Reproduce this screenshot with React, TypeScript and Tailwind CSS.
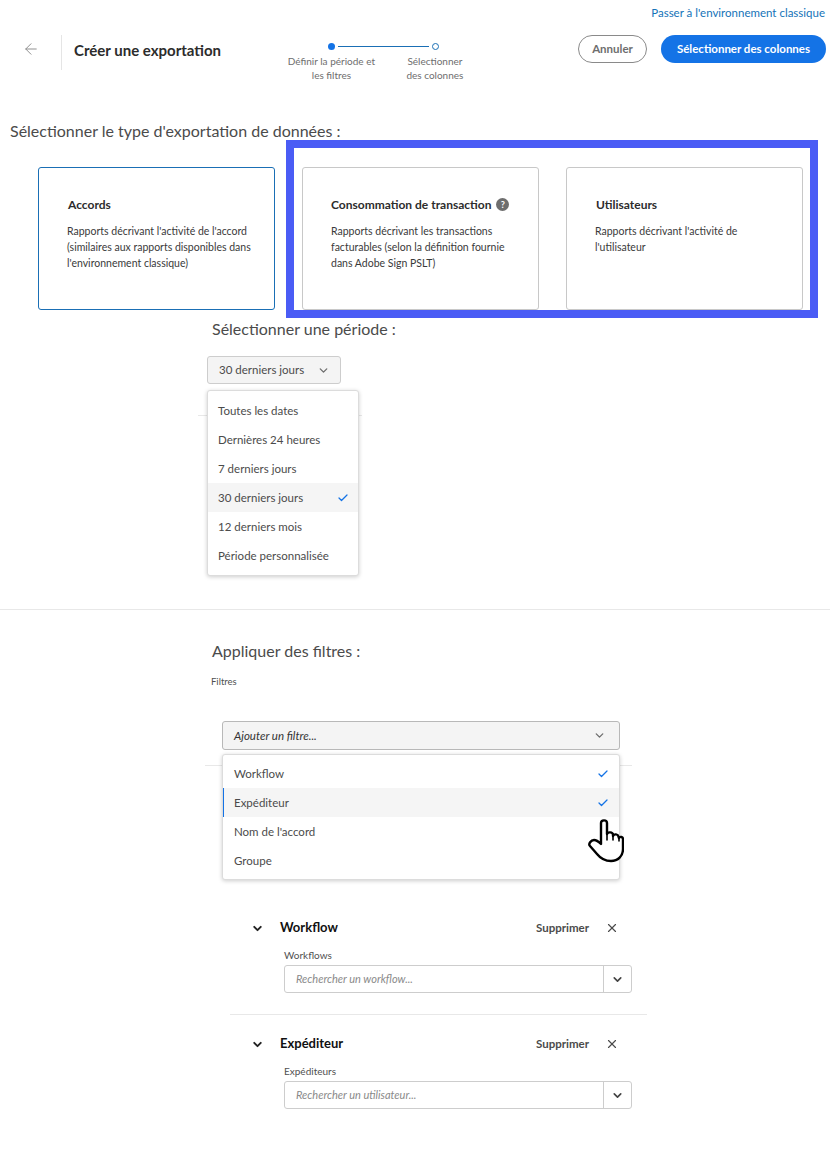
import { ArrowLeft, Check, ChevronDown, X } from 'lucide-react'

const PERIODS = ['Toutes les dates', 'Dernières 24 heures', '7 derniers jours', '30 derniers jours', '12 derniers mois', 'Période personnalisée']

const FILTERS = [
  { label: 'Workflow', checked: true },
  { label: 'Expéditeur', checked: true, active: true },
  { label: "Nom de l'accord" },
  { label: 'Groupe' },
]

function ExportCard({ title, lines, selected, help, className }: { title: string; lines: string[]; selected?: boolean; help?: boolean; className?: string }) {
  return (
    <div className={`w-[237px] h-[143px] shrink-0 rounded-[3px] border bg-white pl-[28px] ${selected ? 'border-[#1a6fb5]' : 'border-[#c8c8c8]'} ${className ?? ''}`}>
      <div className="flex items-center gap-[5px] pt-[27px] h-[46px] text-[12px] font-bold text-[#2c2c2c]">
        <span className={help ? '' : 'pl-[1px]'}>{title}</span>
        {help && (
          <span className="flex h-[13px] w-[13px] items-center justify-center rounded-full bg-[#6e6e6e] text-[9px] font-bold text-white">?</span>
        )}
      </div>
      <div className="mt-[9px] text-[10.5px] leading-[16px] text-[#3a3a3a]">
        {lines.map(l => <div key={l}>{l}</div>)}
      </div>
    </div>
  )
}

function FilterGroup({ title, label, placeholder }: { title: string; label: string; placeholder: string }) {
  return (
    <div className="pl-[20px]">
      <div className="flex items-center h-[20px]">
        <ChevronDown className="ml-[1px] h-[13px] w-[13px] text-[#222]" strokeWidth={3.5} />
        <span className="ml-[16px] text-[13px] font-bold text-[#111]">{title}</span>
        <span className="ml-auto text-[11.5px] font-bold text-[#4b4b4b]">Supprimer</span>
        <X className="ml-[16px] mr-[28px] h-[14px] w-[14px] text-[#4b4b4b]" strokeWidth={2} />
      </div>
      <div className="ml-[34px] mt-[11px] text-[10px] leading-[12px] text-[#505050]">{label}</div>
      <div className="ml-[34px] mt-[4px] flex h-[28px] w-[348px] items-center rounded-[3px] border border-[#cdcdcd] bg-white">
        <span className="flex-1 pl-[11px] text-[11px] italic text-[#8a8a8a]">{placeholder}</span>
        <span className="flex h-full w-[28px] items-center justify-center border-l border-[#cdcdcd]">
          <ChevronDown className="h-[13px] w-[13px] text-[#444]" strokeWidth={3} />
        </span>
      </div>
    </div>
  )
}

export default function App() {
  return (
    <div className="relative h-[1173px] w-[830px] overflow-hidden bg-white font-['Lato',sans-serif] text-[#4b4b4b]">
      <div className="flex h-[35px] justify-end pr-[5px] pt-[5px] text-[11.5px] leading-[16px] text-[#1473b8]">
        Passer à l'environnement classique
      </div>

      <header className="flex h-[35px] items-start">
        <div className="flex h-[28px] w-[61px] items-center justify-center">
          <ArrowLeft className="h-[18px] w-[18px] text-[#8a8a8a]" strokeWidth={1.25} />
        </div>
        <div className="h-[35px] border-l border-[#e5e5e5] pl-[12px] pt-[5px] text-[15px] font-bold leading-[20px] text-[#2c2c2c]">
          Créer une exportation
        </div>
        <div className="ml-[60px] flex w-[190px] flex-col">
          <div className="ml-[47px] mt-[8px] flex h-[7px] w-[111px] items-center">
            <span className="h-[7px] w-[7px] rounded-full bg-[#1473e6]" />
            <span className="mx-[3px] h-px flex-1 bg-[#1a6fb5]" />
            <span className="h-[7px] w-[7px] rounded-full border border-[#1a6fb5]" />
          </div>
          <div className="mt-[4px] flex text-center text-[10px] leading-[14px] text-[#6e6e6e]">
            <span className="w-[103px]">Définir la période et les filtres</span>
            <span className="ml-[17px] w-[74px]">Sélectionner des colonnes</span>
          </div>
        </div>
        <div className="ml-auto flex gap-[14px] pr-[4px]">
          <span className="flex h-[28px] w-[69px] items-center justify-center rounded-full border border-[#8a8a8a] text-[11.5px] font-bold text-[#6e6e6e]">Annuler</span>
          <span className="flex h-[28px] w-[165px] items-center justify-center rounded-full bg-[#1473e6] text-[11.5px] font-bold text-white">Sélectionner des colonnes</span>
        </div>
      </header>

      <h2 className="ml-[10px] mt-[51px] text-[16px] leading-[20px] text-[#4b4b4b]">Sélectionner le type d'exportation de données :</h2>

      <div className="-mt-px flex items-start pl-[38px]">
        <ExportCard
          title="Accords"
          selected
          className="mt-[27px] w-[236px]"
          lines={["Rapports décrivant l'activité de l'accord", '(similaires aux rapports disponibles dans', "l'environnement classique)"]}
        />
        <div className="ml-[11px] flex h-[178px] w-[532px] gap-[27px] border-[8px] border-[#4a5cf5] pl-[8px] pt-[19px]">
          <ExportCard
            title="Consommation de transaction"
            help
            lines={['Rapports décrivant les transactions', 'facturables (selon la définition fournie', 'dans Adobe Sign PSLT)']}
          />
          <ExportCard title="Utilisateurs" lines={["Rapports décrivant l'activité de", "l'utilisateur"]} />
        </div>
      </div>

      <section className="relative h-[292px] border-b border-[#e8e8e8] pl-[207px]">
        <h2 className="ml-[5px] pt-[1px] text-[16px] leading-[20px]">Sélectionner une période :</h2>
        <button className="mt-[17px] flex h-[28px] w-[134px] items-center justify-between rounded-[3px] border border-[#cdcdcd] bg-[#f4f4f4] pl-[11px] pr-[10px] text-[11.5px] text-[#4b4b4b]">
          30 derniers jours
          <ChevronDown className="h-[13px] w-[13px] text-[#6e6e6e]" strokeWidth={2.5} />
        </button>
        <div className="-ml-[9px] mt-[31px] w-[164px] border-t border-[#e8e8e8]" />
        <div className="absolute left-[207px] top-[72px] z-10 w-[152px] rounded-[3px] border border-[#dcdcdc] bg-white py-[5px] shadow-[0_1px_4px_rgba(0,0,0,0.2)]">
          {PERIODS.map(p => (
            <div key={p} className={`flex h-[29px] items-center justify-between pl-[10px] pr-[9px] text-[11.5px] text-[#4b4b4b] ${p === '30 derniers jours' ? 'bg-[#f5f5f5]' : ''}`}>
              {p}
              {p === '30 derniers jours' && <Check className="h-[12px] w-[12px] text-[#1473e6]" strokeWidth={2.5} />}
            </div>
          ))}
        </div>
      </section>

      <section className="relative pl-[211px]">
        <h2 className="ml-[1px] pt-[31px] text-[16px] leading-[20px]">Appliquer des filtres :</h2>
        <div className="mt-[15px] text-[9.5px] leading-[12px] text-[#505050]">Filtres</div>
        <button className="ml-[11px] mt-[33px] flex h-[29px] w-[398px] items-center justify-between rounded-[3px] border border-[#b8b8b8] bg-[#f4f4f4] pl-[11px] pr-[13px] text-[11.5px] italic text-[#333]">
          Ajouter un filtre...
          <ChevronDown className="h-[13px] w-[13px] text-[#6e6e6e]" strokeWidth={2.5} />
        </button>
        <div className="-ml-[6px] mt-[15px] w-[427px] border-t border-[#e8e8e8]" />
        <div className="ml-[61px] mt-[105px] h-[8px] w-[320px] border-x border-[#cdcdcd]" />

        <div className="absolute left-[222px] top-[144px] z-10 w-[398px] rounded-[3px] border border-[#dcdcdc] bg-white py-[4px] shadow-[0_1px_4px_rgba(0,0,0,0.2)]">
          {FILTERS.map(f => (
            <div key={f.label} className={`flex h-[29px] items-center justify-between border-l pl-[10px] pr-[10px] text-[11.5px] text-[#4b4b4b] ${f.active ? 'border-[#1473e6] bg-[#f5f5f5]' : 'border-transparent'}`}>
              {f.label}
              {f.checked && <Check className="h-[12px] w-[12px] text-[#1473e6]" strokeWidth={2.5} />}
            </div>
          ))}
        </div>

        {/* curseur main */}
        <svg className="absolute left-[588px] top-[209px] z-20" width="36" height="44" viewBox="0 0 36 44" fill="none">
          <path
            d="M13 25 L13 4 C13 0.5 19 0.5 19 4 L19 15 C20 12.5 24.5 13 25 15.5 L25 17 C26 14.5 30 15 30.5 17.5 L31 19 C32 17 35 18 35 20 L35 30 C35 37 30 42 23 42 C17 42 13 40 9 35 L2 27 C0 25 3 21 6 21 C9 21 11 23 13 25 Z"
            fill="white"
            stroke="black"
            strokeWidth="2.4"
            strokeLinejoin="round"
          />
          <path d="M19 15 V21 M25 16 V21 M31 19 V22" stroke="black" strokeWidth="1.6" strokeLinecap="round" />
        </svg>
      </section>

      <div className="absolute left-[230px] top-[918px] w-[417px]">
        <FilterGroup title="Workflow" label="Workflows" placeholder="Rechercher un workflow..." />
        <div className="mb-[19px] mt-[21px] border-t border-[#e8e8e8]" />
        <FilterGroup title="Expéditeur" label="Expéditeurs" placeholder="Rechercher un utilisateur..." />
      </div>
    </div>
  )
}
